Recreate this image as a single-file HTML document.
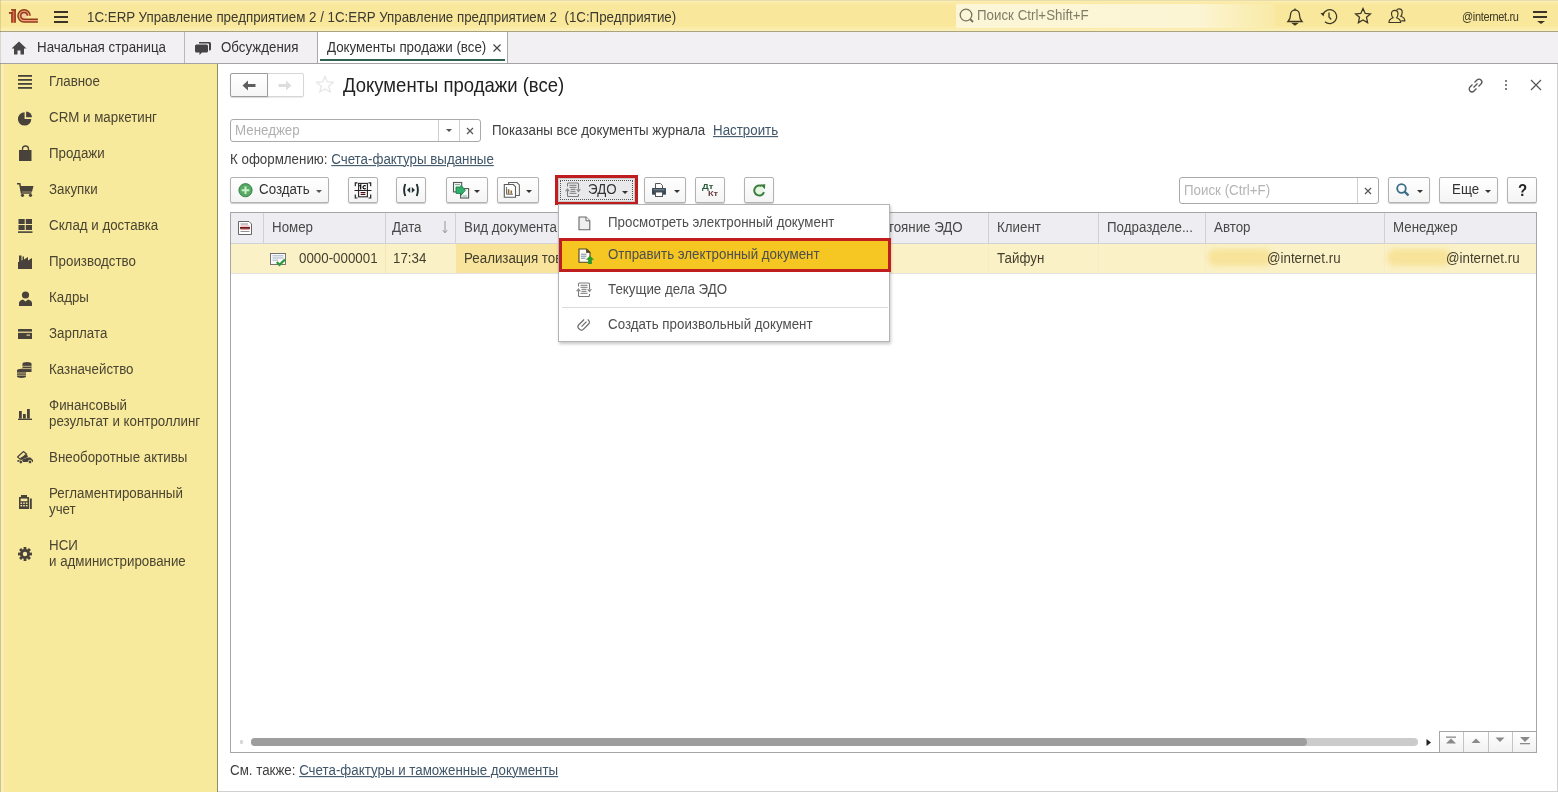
<!DOCTYPE html>
<html><head><meta charset="utf-8">
<style>
*{box-sizing:border-box;margin:0;padding:0}
html,body{width:1558px;height:792px;overflow:hidden;background:#fff}
.t{will-change:transform}
body{font-family:"Liberation Sans",sans-serif;font-size:13.33px;color:#404040;position:relative}
.a{position:absolute}
.t{position:absolute;white-space:pre;line-height:1;margin-top:0.6px;transform:scaleY(1.09);transform-origin:0 11.3px}
#topbar{left:0;top:0;width:1558px;height:32px;background:linear-gradient(#e9dcae 0,#e9dcae 1px,#fbeeb0 1px,#f9e89b 5px,#f9e89b 26px,#fbefb6 30px);border-bottom:1px solid #a9a47f}
#tabs{left:0;top:32px;width:1558px;height:32px;background:#f2f0f2;border-bottom:1px solid #a3a3a3}
#side{left:0;top:64px;width:218px;height:728px;background:linear-gradient(90deg,#ded9a8 0,#ded9a8 1px,#faf0b2 1px,#faf0b2 3px,#fce7a0 4px,#fbe9a0 8px,#f8ea9d 9px);border-right:1px solid #918c62}
.btn{position:absolute;height:26px;top:177px;background:linear-gradient(#fff,#f4f4f4);border:1px solid #b2b2b2;border-radius:2px;box-shadow:0 1px 1px rgba(0,0,0,.2)}
.caret{position:absolute;width:0;height:0;border-left:3px solid transparent;border-right:3px solid transparent;border-top:3px solid #555}
.sb{color:#4a4432}
.th{color:#484848}
.tr{color:#433f2e}
.mi{color:#4e4e4e}
.lnk{color:#3f5568;text-decoration:underline;text-underline-offset:1px;text-decoration-thickness:1px}
</style></head><body>
<!-- TOP BAR -->
<div id="topbar" class="a"></div>
<svg class="a" style="left:8px;top:8px" width="32" height="16" viewBox="0 0 32 16">
 <path d="M22.15 7.85 A6.1 6.1 0 1 0 16.05 13.95 H29.9 V11.15 H16.05 A3.3 3.3 0 1 1 19.35 7.85 Z" fill="#f2a07e"/>
 <circle cx="16.05" cy="7.85" r="2.6" fill="#f8c9a4"/>
 <path d="M3.9 1.8 H7.1 V14.7 H3.9 Z M1 4.8 H3.9 V6 H1 Z" fill="#e26a48"/>
 <g fill="none" stroke="#8f3c1b" stroke-width="1.5">
  <path d="M0.9 4.8 H4.6"/><path d="M3.9 4.1 V14.7"/><path d="M3 1.9 H7.9"/><path d="M7.15 1.2 V14.7"/>
  <path d="M22.15 7.85 A6.1 6.1 0 1 0 16.05 13.95 H29.9"/>
  <path d="M19.35 7.85 A3.3 3.3 0 1 0 16.05 11.15 H29.9"/>
 </g>
</svg>
<div class="a" style="left:54px;top:11px;width:14px;height:1.5px;background:#3a3528"></div>
<div class="a" style="left:54px;top:16px;width:14px;height:1.5px;background:#3a3528"></div>
<div class="a" style="left:54px;top:21px;width:14px;height:1.5px;background:#3a3528"></div>
<div class="t" style="left:87px;top:10px;color:#3c3a30">1С:ERP Управление предприятием 2 / 1С:ERP Управление предприятием 2  (1С:Предприятие)</div>
<div class="a" style="left:956px;top:4px;width:319px;height:24px;background:linear-gradient(90deg,#fcf6d8 0,#fcf5d4 75%,#f9eaa6 100%)"></div>
<svg class="a" style="left:959px;top:7.5px" width="18" height="17" viewBox="0 0 18 17"><circle cx="7" cy="7" r="5.8" fill="none" stroke="#77745e" stroke-width="1.3"/><path d="M11 11 L14 14" stroke="#77745e" stroke-width="2"/></svg>
<div class="t" style="left:977px;top:8.5px;color:#7f7c68">Поиск Ctrl+Shift+F</div>
<svg class="a" style="left:1286px;top:7px" width="18" height="19" viewBox="0 0 18 19" fill="none" stroke="#3d3826" stroke-width="1.3">
 <path d="M2 14.5 H16 C14 12.5 13.5 11 13.5 8 C13.5 5 11.5 3 9 3 C6.5 3 4.5 5 4.5 8 C4.5 11 4 12.5 2 14.5 Z"/><path d="M9 1.5 V3"/><path d="M7 16.5 H11 L9 18 Z" fill="#3d3826"/>
</svg>
<svg class="a" style="left:1320px;top:8px" width="18" height="17" viewBox="0 0 18 17" fill="none" stroke="#3d3826" stroke-width="1.3">
 <path d="M3.2 6 A7 7 0 1 1 5 13.8"/><path d="M0.5 5.3 L4.5 4.5 L3.5 8.5 Z" fill="#3d3826" stroke="none"/><path d="M9 4.5 V9 L11.2 11.5"/>
</svg>
<svg class="a" style="left:1354px;top:7px" width="18" height="18" viewBox="0 0 18 18" fill="none" stroke="#3d3826" stroke-width="1.3">
 <path d="M9 1.5 L11.2 6.4 L16.4 6.9 L12.5 10.3 L13.6 15.6 L9 12.9 L4.4 15.6 L5.5 10.3 L1.6 6.9 L6.8 6.4 Z"/>
</svg>
<svg class="a" style="left:1388px;top:8px" width="18" height="16" viewBox="0 0 18 16" fill="none" stroke="#3d3826" stroke-width="1.2">
 <path d="M1 14.5 C1 11.5 3 10.5 5 9.8 C3.6 8.5 3.5 6.8 3.5 5.5 C3.5 3.5 5 2.3 6.8 2.3 C8.6 2.3 10 3.5 10 5.5 C10 6.8 9.9 8.5 8.6 9.8 C10.6 10.5 12.6 11.5 12.6 14.5 Z"/>
 <path d="M8.6 2.2 C9.1 1.3 10 0.8 11 0.8 C12.8 0.8 14.2 2 14.2 4 C14.2 5.3 14.1 7 12.8 8.3 C14.8 9 16.8 10 16.8 12.8 H13.2"/>
</svg>
<div class="t" style="left:1462px;top:11px;color:#3c3826;font-size:11px;letter-spacing:-0.35px">@internet.ru</div>
<div class="a" style="left:1533px;top:11px;width:14px;height:1.5px;background:#3a3528"></div>
<div class="a" style="left:1533px;top:16px;width:14px;height:1.5px;background:#3a3528"></div>
<div class="a" style="left:1537px;top:21px;width:0;height:0;border-left:4px solid transparent;border-right:4px solid transparent;border-top:3px solid #3a3528"></div>

<!-- TABS -->
<div id="tabs" class="a"></div>
<div class="a" style="left:184px;top:32px;width:1px;height:31px;background:#b8b8b8"></div>
<div class="a" style="left:317px;top:32px;width:191px;height:31px;background:#fff;border-left:1px solid #a8a8a8;border-right:1px solid #a8a8a8"></div>
<div class="a" style="left:320px;top:59px;width:185px;height:2px;background:#2f6350"></div>
<svg class="a" style="left:11px;top:41px" width="16" height="14" viewBox="0 0 16 14"><path d="M8 0.5 L15.5 7.5 H13 V13.5 H9.5 V9.5 H6.5 V13.5 H3 V7.5 H0.5 Z" fill="#474747"/></svg>
<div class="t" style="left:37px;top:40px;color:#333">Начальная страница</div>
<svg class="a" style="left:194px;top:40px" width="18" height="16" viewBox="0 0 18 16"><path d="M5 2 H15.5 Q17 2 17 3.5 V9 Q17 10.5 15.5 10.5 H15 V4.5 Q15 3.5 14 3.5 H5 Z" fill="#444"/><path d="M2.5 4.5 H12.5 Q14 4.5 14 6 V11 Q14 12.5 12.5 12.5 H8 L5.5 15 V12.5 H2.5 Q1 12.5 1 11 V6 Q1 4.5 2.5 4.5 Z" fill="#444"/></svg>
<div class="t" style="left:221px;top:40px;color:#333">Обсуждения</div>
<div class="t" style="left:327px;top:40px;color:#333">Документы продажи (все)</div>
<svg class="a" style="left:493px;top:44px" width="8" height="8" viewBox="0 0 8 8"><path d="M0.5 0.5 L7.5 7.5 M7.5 0.5 L0.5 7.5" stroke="#444" stroke-width="1.2"/></svg>

<!-- SIDEBAR -->
<div id="side" class="a"></div>
<svg class="a" style="left:18px;top:75px" width="14" height="14" viewBox="0 0 14 14" fill="#48423a"><rect x="0" y="0" width="14" height="1.8"/><rect x="0" y="4" width="14" height="1.8"/><rect x="0" y="8" width="14" height="1.8"/><rect x="0" y="12" width="14" height="1.8"/></svg>
<div class="t sb" style="left:49px;top:74px">Главное</div>
<svg class="a" style="left:18px;top:111px" width="15" height="15" viewBox="0 0 15 15"><path d="M6.6 1.2 V7.9 H13.3 A6.7 6.7 0 1 1 6.6 1.2 Z" fill="#48423a"/><path d="M8.1 0.4 A5.9 5.9 0 0 1 14 6.3 H8.1 Z" fill="#48423a"/></svg>
<div class="t sb" style="left:49px;top:110px">CRM и маркетинг</div>
<svg class="a" style="left:19px;top:145px" width="13" height="16" viewBox="0 0 13 16"><path d="M3.5 6 V4 A3 3 0 0 1 9.5 4 V6" stroke="#48423a" stroke-width="1.3" fill="none"/><rect x="0" y="5" width="12.5" height="11" fill="#48423a"/></svg>
<div class="t sb" style="left:49px;top:146px">Продажи</div>
<svg class="a" style="left:17px;top:183px" width="17" height="14" viewBox="0 0 17 14"><path d="M0 0.8 H2.8 L4.5 10 H14.5" stroke="#48423a" stroke-width="1.5" fill="none"/><path d="M3.2 3 H16.5 L15 8.8 H4.3 Z" fill="#48423a"/><circle cx="5.5" cy="12.3" r="1.6" fill="#48423a"/><circle cx="13.5" cy="12.3" r="1.6" fill="#48423a"/></svg>
<div class="t sb" style="left:49px;top:182px">Закупки</div>
<svg class="a" style="left:17.5px;top:219px" width="15" height="14" viewBox="0 0 15 14" fill="#48423a"><rect x="0.5" y="0" width="6.2" height="5"/><rect x="7.8" y="0" width="6.2" height="5"/><rect x="0.5" y="6" width="6.2" height="5"/><rect x="7.8" y="6" width="6.2" height="5"/><rect x="0" y="12.3" width="14.5" height="1.6"/></svg>
<div class="t sb" style="left:49px;top:218px">Склад и доставка</div>
<svg class="a" style="left:18px;top:255px" width="14" height="14" viewBox="0 0 14 14" fill="#48423a"><path d="M0 14 V7 L1 7 V0.5 H3.5 V5.5 L4.5 5 V1.5 L6 1.5 V4.5 L10 2 V5.5 L14 3 V14 Z"/></svg>
<div class="t sb" style="left:49px;top:254px">Производство</div>
<svg class="a" style="left:19px;top:290.5px" width="13" height="15" viewBox="0 0 13 15" fill="#48423a"><circle cx="6.5" cy="4" r="3.6"/><path d="M0 15 V12 C0 10 2 9 4 8.5 L6.5 10.5 L9 8.5 C11 9 13 10 13 12 V15 Z"/></svg>
<div class="t sb" style="left:49px;top:290px">Кадры</div>
<svg class="a" style="left:18px;top:329px" width="14" height="10" viewBox="0 0 14 10"><rect x="0" y="0" width="14" height="10" rx="0.5" fill="#48423a"/><rect x="0" y="2.6" width="14" height="1.2" fill="#f9eba3"/><rect x="8.5" y="5.6" width="3.5" height="1" fill="#f9eba3"/></svg>
<div class="t sb" style="left:49px;top:326px">Зарплата</div>
<svg class="a" style="left:17px;top:362px" width="15" height="16" viewBox="0 0 15 16" fill="#48423a"><ellipse cx="10" cy="1.8" rx="4.5" ry="1.8"/><rect x="5.5" y="2" width="9" height="8"/><ellipse cx="4.5" cy="8.5" rx="4.5" ry="1.8"/><rect x="0" y="8.5" width="9" height="6"/><ellipse cx="4.5" cy="14.3" rx="4.5" ry="1.7"/><path d="M5.5 4.3 H14.5 M5.5 6.6 H14.5 M0 11 H9 M0 13.2 H9" stroke="#f9eba3" stroke-width="0.7"/></svg>
<div class="t sb" style="left:49px;top:362px">Казначейство</div>
<svg class="a" style="left:18px;top:409px" width="14" height="11" viewBox="0 0 14 11" fill="#48423a"><rect x="1" y="2" width="2.8" height="7.5"/><rect x="5" y="5" width="2.8" height="4.5"/><rect x="9" y="0" width="2.8" height="9.5"/><rect x="0" y="9.6" width="14" height="1.4"/></svg>
<div class="t sb" style="left:49px;top:398px">Финансовый</div>
<div class="t sb" style="left:49px;top:414px">результат и контроллинг</div>
<svg class="a" style="left:16.5px;top:451px" width="17" height="13" viewBox="0 0 17 13" fill="#48423a"><path d="M0.5 6 L6.5 0.5 L9.5 3 L3.5 8.5 Z" fill="none" stroke="#48423a" stroke-width="1.2"/><path d="M4 9 L11 6.5 H13.5 L16 9 V11 H0.5 V9 Z"/><path d="M3 7 L10 3.5 L11 6 L4 9 Z"/><circle cx="3.8" cy="11" r="1.8" fill="#48423a" stroke="#f9eba3" stroke-width="0.8"/><circle cx="13" cy="11" r="1.8" fill="#48423a" stroke="#f9eba3" stroke-width="0.8"/></svg>
<div class="t sb" style="left:49px;top:450px">Внеоборотные активы</div>
<svg class="a" style="left:18.5px;top:495px" width="13" height="14" viewBox="0 0 13 14" fill="#48423a"><rect x="0" y="2" width="10" height="12"/><rect x="10.8" y="3.5" width="2" height="10.5"/><rect x="2" y="0" width="6" height="3"/><g fill="#f9eba3"><rect x="1.6" y="3.6" width="6.8" height="2.6"/><rect x="1.5" y="7.5" width="1.6" height="1.4"/><rect x="4.2" y="7.5" width="1.6" height="1.4"/><rect x="6.9" y="7.5" width="1.6" height="1.4"/><rect x="1.5" y="10" width="1.6" height="1.4"/><rect x="4.2" y="10" width="1.6" height="1.4"/><rect x="6.9" y="10" width="1.6" height="1.4"/></g></svg>
<div class="t sb" style="left:49px;top:486px">Регламентированный</div>
<div class="t sb" style="left:49px;top:502px">учет</div>
<svg class="a" style="left:18px;top:547px" width="14" height="14" viewBox="0 0 14 14"><g fill="#48423a"><circle cx="7" cy="7" r="5"/><g id="tt"><rect x="5.6" y="0" width="2.8" height="14"/></g><rect x="5.6" y="0" width="2.8" height="14" transform="rotate(45 7 7)"/><rect x="5.6" y="0" width="2.8" height="14" transform="rotate(90 7 7)"/><rect x="5.6" y="0" width="2.8" height="14" transform="rotate(135 7 7)"/></g><circle cx="7" cy="7" r="2.2" fill="#f9eba3"/></svg>
<div class="t sb" style="left:49px;top:538px">НСИ</div>
<div class="t sb" style="left:49px;top:554px">и администрирование</div>


<!-- MAIN HEADER -->
<div class="a" style="left:1557px;top:64px;width:1px;height:728px;background:#d0d0d0"></div>
<div class="a" style="left:218px;top:791px;width:1340px;height:1px;background:#d0d0d0"></div>
<div class="a" style="left:267px;top:73px;width:37px;height:24px;border:1px solid #d6d6d6;border-radius:0 2px 2px 0;background:#fff;box-shadow:0 1px 1px rgba(0,0,0,.08)"></div>
<div class="a" style="left:230px;top:73px;width:38px;height:24px;border:1px solid #9c9c9c;border-radius:2px 0 0 2px;background:linear-gradient(#fff,#f6f6f6);box-shadow:0 1px 1px rgba(0,0,0,.15)"></div>
<svg class="a" style="left:242px;top:80px" width="14" height="12" viewBox="0 0 14 12"><path d="M0.5 5.5 L6 0.5 V4 H13.5 V7 H6 V10.5 Z" fill="#5e5e5e"/></svg>
<svg class="a" style="left:278px;top:80px" width="14" height="12" viewBox="0 0 14 12"><path d="M13.5 5.5 L8 0.5 V4 H0.5 V7 H8 V10.5 Z" fill="#dedede"/></svg>
<svg class="a" style="left:315px;top:75px" width="20" height="19" viewBox="0 0 20 19"><path d="M10 1.5 L12.4 7 L18.3 7.4 L13.8 11.2 L15.2 17 L10 13.9 L4.8 17 L6.2 11.2 L1.7 7.4 L7.6 7 Z" fill="none" stroke="#e6e6e6" stroke-width="1.3"/></svg>
<div class="t" style="left:343px;top:76px;font-size:18.5px;color:#222;transform-origin:0 15.66px">Документы продажи (все)</div>
<svg class="a" style="left:1467px;top:77px" width="17" height="17" viewBox="0 0 17 17" fill="none" stroke="#555" stroke-width="1.3"><path d="M7.5 5.5 L10 3 A2.6 2.6 0 0 1 14 7 L11.5 9.5"/><path d="M9.5 11.5 L7 14 A2.6 2.6 0 0 1 3 10 L5.5 7.5"/><path d="M6.5 10.5 L10.5 6.5"/></svg>
<div class="a" style="left:1505px;top:80px;width:2px;height:2px;background:#555;border-radius:1px"></div>
<div class="a" style="left:1505px;top:84px;width:2px;height:2px;background:#555;border-radius:1px"></div>
<div class="a" style="left:1505px;top:88px;width:2px;height:2px;background:#555;border-radius:1px"></div>
<svg class="a" style="left:1530px;top:79px" width="12" height="12" viewBox="0 0 12 12"><path d="M1 1 L11 11 M11 1 L1 11" stroke="#555" stroke-width="1.2"/></svg>

<!-- FILTER -->
<div class="a" style="left:230px;top:119px;width:251px;height:23px;border:1px solid #a9a9a9;border-radius:3px;background:#fff"></div>
<div class="a" style="left:438px;top:120px;width:1px;height:21px;background:#d0d0d0"></div>
<div class="a" style="left:459px;top:120px;width:1px;height:21px;background:#d0d0d0"></div>
<div class="t" style="left:235px;top:123px;color:#b0b0b0">Менеджер</div>
<div class="caret" style="left:445.5px;top:129px;border-top-color:#555"></div>
<svg class="a" style="left:466px;top:127px" width="8" height="8" viewBox="0 0 8 8"><path d="M1 1 L7 7 M7 1 L1 7" stroke="#555" stroke-width="1.2"/></svg>
<div class="t" style="left:492px;top:123px;color:#404040">Показаны все документы журнала</div>
<div class="t lnk" style="left:713px;top:123px">Настроить</div>
<div class="t" style="left:230px;top:152px;color:#404040">К оформлению: <span class="lnk">Счета-фактуры выданные</span></div>

<!-- TOOLBAR -->
<div class="btn" style="left:230px;width:99px"></div>
<svg class="a" style="left:237.5px;top:182.5px" width="15" height="15" viewBox="0 0 15 15"><circle cx="7.5" cy="7.2" r="6.6" fill="#58a866" stroke="#2f7a40" stroke-width="0.9"/><path d="M7.5 3.4 V11 M3.7 7.2 H11.3" stroke="#c9f3c9" stroke-width="2"/></svg>
<div class="t" style="left:259px;top:182px;color:#333">Создать</div>
<div class="caret" style="left:316px;top:190px;border-left-width:3.5px;border-right-width:3.5px;border-top-width:3.5px"></div>

<div class="btn" style="left:348px;width:30px"></div>
<svg class="a" style="left:354px;top:182px" width="18" height="17" viewBox="0 0 18 17">
 <path d="M3.5 0.8 H1.3 V4.2 M14.5 0.8 H16.7 V4.2 M1.3 12.6 V16 H3.5 M16.7 12.6 V16 H14.5" fill="none" stroke="#222" stroke-width="1.2"/>
 <rect x="4.6" y="1.4" width="8.8" height="13.4" fill="#fff" stroke="#2a2222" stroke-width="1.1"/>
 <path d="M0.5 8.5 H17.5" stroke="#2a2222" stroke-width="1"/>
 <path d="M6.6 10.6 H11.4 M6.6 12.5 H11.4" stroke="#4a1010" stroke-width="1.1"/>
 <path d="M5.4 3.9 L6.7 3 V7.6" fill="none" stroke="#000" stroke-width="1.2"/>
 <path d="M11.73 4.17 A1.6 1.6 0 1 0 11.73 6.43" fill="none" stroke="#000" stroke-width="1.2"/>
</svg>

<div class="btn" style="left:396px;width:30px"></div>
<svg class="a" style="left:402px;top:183px" width="18" height="14" viewBox="0 0 18 14">
 <path d="M3.3 1 Q0.9 7 3.3 13" fill="none" stroke="#1f2f2f" stroke-width="1.9"/><path d="M14.7 1 Q17.1 7 14.7 13" fill="none" stroke="#1f2f2f" stroke-width="1.9"/>
 <path d="M8.2 4 L5 7 L8.2 10 Z M9.8 4 L13 7 L9.8 10 Z" fill="#1f2f2f"/>
</svg>

<div class="btn" style="left:446px;width:42px"></div>
<svg class="a" style="left:452px;top:181px" width="18" height="18" viewBox="0 0 18 18">
 <rect x="1.5" y="1.5" width="8.2" height="9.4" fill="#f4fbf6" stroke="#555" stroke-width="1.1"/>
 <path d="M3 3.6 H8" stroke="#6a9a88" stroke-width="0.9"/>
 <rect x="8.6" y="7.6" width="8" height="9.4" fill="#f4fbf6" stroke="#555" stroke-width="1.1"/>
 <path d="M10.5 15 H15" stroke="#6a9a88" stroke-width="0.8"/>
 <path d="M4 6 L9 6 L9 4.3 L13.3 9.3 L9 14.3 L9 12.4 L4 12.4 Z" fill="#33b070" stroke="#1d7d48" stroke-width="0.9" stroke-linejoin="round"/>
</svg>
<div class="caret" style="left:474px;top:190px;border-left-width:3.5px;border-right-width:3.5px;border-top-width:3px;border-top-color:#333"></div>

<div class="btn" style="left:497px;width:42px"></div>
<svg class="a" style="left:503px;top:181px" width="18" height="18" viewBox="0 0 18 18">
 <path d="M5.6 1.5 H14 L16.4 3.9 V14.5 H5.6 Z" fill="#fafaf6" stroke="#666" stroke-width="1.1"/>
 <path d="M1.3 3.5 H10.3 L12.5 5.7 V16.3 H1.3 Z" fill="#fff" stroke="#5a5a5a" stroke-width="1.1"/>
 <path d="M3.6 6 V13.2 H10" fill="none" stroke="#555" stroke-width="0.9"/>
 <path d="M5.6 12.8 V8.2 M8.3 12.8 V9.5" stroke="#8a6a30" stroke-width="1.6"/>
</svg>
<div class="caret" style="left:526px;top:190px;border-left-width:3.5px;border-right-width:3.5px;border-top-width:3px;border-top-color:#333"></div>

<!-- EDO pressed -->
<div class="a" style="left:558px;top:178px;width:77px;height:24px;background:#e9e9eb;border:1px solid #c8c8c8"></div>
<div class="a" style="left:560px;top:180px;width:73px;height:20px;border:1px dotted #555"></div>
<svg class="a" style="left:564px;top:182px" width="18" height="15" viewBox="0 0 18 15">
 <path d="M3.5 4.5 V2 Q3.5 1 4.5 1 H13.5 Q14.5 1 14.5 2 V7 M3.5 9 V13.5 Q3.5 14.5 4.5 14.5 H13.5 Q14.5 14.5 14.5 13.5 V12" fill="none" stroke="#7a7a7a" stroke-width="1.1"/>
 <path d="M5.5 3.3 H12.5 M5.5 5.3 H12.5 M6.5 7.3 H11.5 M6.5 9.3 H11.5 M5.5 11.3 H12.5" stroke="#777" stroke-width="1"/>
 <path d="M1 9.2 L3.5 6 L6 9.2 Z M12 7.2 H17 L14.5 10.4 Z" fill="#8a8a8a"/>
</svg>
<div class="t" style="left:587.5px;top:182px;color:#333">ЭДО</div>
<div class="caret" style="left:622px;top:190.5px;border-top-color:#333"></div>
<div class="a" style="left:555px;top:175px;width:83px;height:30px;border:3px solid #c01e1e"></div>

<div class="btn" style="left:644px;width:42px"></div>
<svg class="a" style="left:652px;top:183px" width="14" height="14" viewBox="0 0 14 14">
 <path d="M3.5 5 V0.5 H8.5 L10.5 2.5 V5" fill="#fff" stroke="#555" stroke-width="1"/>
 <rect x="0" y="5" width="14" height="6.7" rx="0.8" fill="#3b4a56"/>
 <path d="M1.5 6.8 H12.5" stroke="#7f94a3" stroke-width="0.9"/>
 <rect x="3.5" y="9" width="7" height="4.5" fill="#fff" stroke="#555" stroke-width="1"/>
</svg>
<div class="caret" style="left:673.5px;top:190px;border-left-width:3px;border-right-width:3px;border-top-width:3px;border-top-color:#333"></div>

<div class="btn" style="left:695px;width:30px"></div>
<div class="t" style="left:702px;top:182.8px;margin-top:0;transform:scaleX(1.18);transform-origin:0 0;font-size:8px;font-weight:bold;color:#2b5a3c;-webkit-text-stroke:0">Дт</div>
<div class="t" style="left:708px;top:190.3px;margin-top:0;transform:scaleX(1.15);transform-origin:0 0;font-size:8px;font-weight:bold;color:#6a3a42;-webkit-text-stroke:0">Кт</div>

<div class="btn" style="left:744px;width:30px"></div>
<svg class="a" style="left:752.5px;top:183.5px" width="13" height="13" viewBox="0 0 13 13">
 <circle cx="6.3" cy="6.5" r="4" fill="#e2f6e0"/>
 <path d="M11 8.2 A5 5 0 1 1 8.6 2.1" fill="none" stroke="#3c7d3e" stroke-width="2"/>
 <path d="M7.2 0.6 L12.3 0.3 L11.8 5.2 Z" fill="#3c7d3e"/>
</svg>

<!-- right toolbar -->
<div class="a" style="left:1179px;top:177px;width:200px;height:27px;border:1px solid #a9a9a9;border-radius:3px;background:#fff"></div>
<div class="a" style="left:1357px;top:178px;width:1px;height:25px;background:#d0d0d0"></div>
<div class="t" style="left:1184px;top:183px;color:#b4b4b4">Поиск (Ctrl+F)</div>
<svg class="a" style="left:1363.5px;top:187px" width="8" height="8" viewBox="0 0 8 8"><path d="M1 1 L7 7 M7 1 L1 7" stroke="#555" stroke-width="1.2"/></svg>

<div class="btn" style="left:1388px;width:42px"></div>
<svg class="a" style="left:1396px;top:183px" width="14" height="14" viewBox="0 0 14 14"><circle cx="5.5" cy="5.5" r="4.3" fill="none" stroke="#3a6c86" stroke-width="1.8"/><path d="M8.5 8.5 L12.5 12.5" stroke="#3a6c86" stroke-width="2.4"/></svg>
<div class="caret" style="left:1417px;top:190px;border-top-color:#333"></div>

<div class="btn" style="left:1439px;width:59px"></div>
<div class="t" style="left:1452px;top:182px;color:#333">Еще</div>
<div class="caret" style="left:1485px;top:190px;border-top-color:#333"></div>

<div class="btn" style="left:1507px;width:30px"></div>
<div class="t" style="left:1517.5px;top:182px;font-size:15px;font-weight:bold;color:#222">?</div>

<!-- TABLE -->
<div class="a" style="left:230px;top:212px;width:1307px;height:541px;border:1px solid #a5a5a5;background:#fff"></div>
<div class="a" style="left:231px;top:213px;width:1305px;height:30px;background:#eeeef2"></div>
<div class="a" style="left:231px;top:243px;width:1305px;height:1px;background:#d2d2d2"></div>
<div class="a" style="left:231px;top:244px;width:1305px;height:29px;background:#fbf1c6"></div>
<div class="a" style="left:456px;top:244px;width:435px;height:29px;background:#f8e49c"></div>
<div class="a" style="left:231px;top:273px;width:1305px;height:1px;background:#e2e2e2"></div>
<div class="a" style="left:263px;top:213px;width:1px;height:30px;background:#d0d0d0"></div>
<div class="a" style="left:385px;top:213px;width:1px;height:30px;background:#d0d0d0"></div>
<div class="a" style="left:455px;top:213px;width:1px;height:30px;background:#d0d0d0"></div>
<div class="a" style="left:988px;top:213px;width:1px;height:30px;background:#d0d0d0"></div>
<div class="a" style="left:1098px;top:213px;width:1px;height:30px;background:#d0d0d0"></div>
<div class="a" style="left:1205px;top:213px;width:1px;height:30px;background:#d0d0d0"></div>
<div class="a" style="left:1384px;top:213px;width:1px;height:30px;background:#d0d0d0"></div>
<div class="a" style="left:385px;top:244px;width:1px;height:29px;background:#f3e6b8"></div>
<div class="a" style="left:988px;top:244px;width:1px;height:29px;background:#f6ecc8"></div>
<div class="a" style="left:1098px;top:244px;width:1px;height:29px;background:#f6ecc8"></div>
<div class="a" style="left:1205px;top:244px;width:1px;height:29px;background:#f6ecc8"></div>
<div class="a" style="left:1384px;top:244px;width:1px;height:29px;background:#f6ecc8"></div>
<svg class="a" style="left:238px;top:221px" width="14" height="14" viewBox="0 0 14 14">
 <path d="M0.5 0.5 H11 L13.5 3 V13.5 H0.5 Z" fill="#fff" stroke="#555" stroke-width="0.9"/>
 <path d="M2.5 3 H10 M2.5 10.5 H11.5" stroke="#777" stroke-width="0.8"/>
 <path d="M2.5 5 H11.5 M2.5 8.5 H11.5" stroke="#e08080" stroke-width="0.8"/>
 <rect x="2" y="6" width="10" height="1.8" fill="#6a1a1a"/>
</svg>
<div class="t th" style="left:272px;top:220px">Номер</div>
<div class="t th" style="left:392px;top:220px">Дата</div>
<svg class="a" style="left:441px;top:221px" width="8" height="13" viewBox="0 0 8 13"><path d="M4 0 V11.5" stroke="#8a8a8a" stroke-width="0.9"/><path d="M1.8 9.2 L4 11.8 L6.2 9.2" fill="none" stroke="#8a8a8a" stroke-width="0.9"/></svg>
<div class="t th" style="left:464px;top:220px">Вид документа</div>
<div class="t th" style="left:863.5px;top:220px">Состояние ЭДО</div>
<div class="t th" style="left:997px;top:220px">Клиент</div>
<div class="t th" style="left:1107px;top:220px">Подразделе...</div>
<div class="t th" style="left:1214px;top:220px">Автор</div>
<div class="t th" style="left:1393px;top:220px">Менеджер</div>

<svg class="a" style="left:270px;top:253px" width="17" height="14" viewBox="0 0 17 14">
 <rect x="0.5" y="0.5" width="15" height="11" fill="#fafafa" stroke="#666" stroke-width="0.9"/>
 <path d="M2.5 2.8 H13.5 M2.5 5 H13.5 M2.5 7.2 H8" stroke="#8aa0b8" stroke-width="0.8"/>
 <path d="M6.8 9 L9.5 11.8 L15 6.5" fill="none" stroke="#2f9a3a" stroke-width="2.3"/>
</svg>
<div class="t tr" style="left:299px;top:251px">0000-000001</div>
<div class="t tr" style="left:393px;top:251px">17:34</div>
<div class="t tr" style="left:464px;top:251px">Реализация товаров</div>
<div class="t tr" style="left:997px;top:251px">Тайфун</div>
<div class="a" style="left:1208px;top:249px;width:64px;height:17px;border-radius:8px;background:#f7e39a;filter:blur(2.5px)"></div>
<div class="a" style="left:1387px;top:249px;width:64px;height:17px;border-radius:8px;background:#f7e39a;filter:blur(2.5px)"></div>
<div class="t tr" style="left:1267px;top:251px">@internet.ru</div>
<div class="t tr" style="left:1446px;top:251px">@internet.ru</div>

<!-- scrollbar -->
<div class="a" style="left:240px;top:740px;width:3px;height:4px;background:#d8d8d8;border-radius:1px"></div>
<div class="a" style="left:251px;top:738px;width:1167px;height:8px;border-radius:4px;background:#cbcbcb"></div>
<div class="a" style="left:251px;top:738px;width:1056px;height:8px;border-radius:4px;background:#9d9d9d"></div>
<svg class="a" style="left:1426px;top:739px" width="6" height="7" viewBox="0 0 6 7"><path d="M0.5 0 L5 3.5 L0.5 7 Z" fill="#222"/></svg>
<div class="a" style="left:1439px;top:731px;width:98px;height:22px;border:1px solid #a5a5a5;border-right-color:#a5a5a5;background:linear-gradient(#fff,#f1f1f1)"></div>
<div class="a" style="left:1463px;top:732px;width:1px;height:20px;background:#c4c4c4"></div>
<div class="a" style="left:1488px;top:732px;width:1px;height:20px;background:#c4c4c4"></div>
<div class="a" style="left:1512px;top:732px;width:1px;height:20px;background:#c4c4c4"></div>
<svg class="a" style="left:1444px;top:736px" width="14" height="11" viewBox="0 0 14 11" fill="#8a8a8a"><rect x="2" y="0.5" width="10" height="1.3"/><path d="M7 2.5 L12 7.5 H2 Z"/></svg>
<svg class="a" style="left:1469px;top:736px" width="14" height="11" viewBox="0 0 14 11" fill="#8a8a8a"><path d="M7 2.5 L11.5 7 H2.5 Z"/></svg>
<svg class="a" style="left:1493px;top:736px" width="14" height="11" viewBox="0 0 14 11" fill="#8a8a8a"><path d="M2.5 1.5 H11.5 L7 6 Z"/></svg>
<svg class="a" style="left:1518px;top:736px" width="14" height="11" viewBox="0 0 14 11" fill="#8a8a8a"><path d="M2 1 H12 L7 6 Z"/><rect x="2" y="7" width="10" height="1.3"/></svg>

<div class="t" style="left:230px;top:763px;color:#404040">См. также: <span class="lnk">Счета-фактуры и таможенные документы</span></div>

<!-- MENU -->
<div class="a" style="left:558px;top:204px;width:332px;height:138px;background:#fff;border:1px solid #b4b4b4;box-shadow:1px 2px 3px rgba(0,0,0,.22)"></div>
<div class="a" style="left:562px;top:307px;width:326px;height:1px;background:#dcdcdc"></div>
<div class="a" style="left:559px;top:238px;width:332px;height:34px;background:#f6c623;border:3px solid #c01e1e"></div>
<svg class="a" style="left:577.5px;top:215.5px" width="13" height="15" viewBox="0 0 13 15"><path d="M1 1 H8 L11.8 4.8 V13.8 H1 Z" fill="#efefef" stroke="#666" stroke-width="1.1"/><path d="M8 1 V4.8 H11.8" fill="#fff" stroke="#666" stroke-width="1"/></svg>
<div class="t mi" style="left:608px;top:215px">Просмотреть электронный документ</div>
<svg class="a" style="left:577.5px;top:247.5px" width="17" height="17" viewBox="0 0 17 17"><path d="M1 1 H8.5 L12 4.5 V14.3 H1 Z" fill="#fbfbf4" stroke="#4f4528" stroke-width="1.1"/><path d="M8.5 1 V4.5 H12 Z" fill="#4f4528" stroke="#4f4528" stroke-width="0.8"/><path d="M3 6.2 H8.5 M3 8.2 H8.5 M3 10.2 H7.5" stroke="#5a6f8f" stroke-width="0.8"/><path d="M12 7.8 L16.2 11.8 H13.9 V16 H10.1 V11.8 H7.8 Z" fill="#2f9a2c"/></svg>
<div class="t mi" style="left:608px;top:247px">Отправить электронный документ</div>
<svg class="a" style="left:575px;top:282px" width="18" height="15" viewBox="0 0 18 15">
 <path d="M3.5 4.5 V2 Q3.5 1 4.5 1 H13.5 Q14.5 1 14.5 2 V7 M3.5 9 V13.5 Q3.5 14.5 4.5 14.5 H13.5 Q14.5 14.5 14.5 13.5 V12" fill="none" stroke="#7a7a7a" stroke-width="1.1"/>
 <path d="M5.5 3.3 H12.5 M5.5 5.3 H12.5 M6.5 7.3 H11.5 M6.5 9.3 H11.5 M5.5 11.3 H12.5" stroke="#777" stroke-width="1"/>
 <path d="M1 9.2 L3.5 6 L6 9.2 Z M12 7.2 H17 L14.5 10.4 Z" fill="#8a8a8a"/>
</svg>
<div class="t mi" style="left:608px;top:282px">Текущие дела ЭДО</div>
<svg class="a" style="left:577px;top:317px" width="14" height="15" viewBox="0 0 14 15"><g transform="translate(6.8 7.3) rotate(45)" fill="none" stroke="#6a6a6a" stroke-width="1.2"><path d="M-0.6 -6.2 H0.6 A2.6 2.6 0 0 1 3.2 -3.6 V3.9 A2.6 2.6 0 0 1 0.6 6.5 H-0.6 A2.6 2.6 0 0 1 -3.2 3.9 V-3.6"/><path d="M0 -3.8 V3.2"/></g></svg>
<div class="t mi" style="left:608px;top:317px">Создать произвольный документ</div>
<div class="a" style="left:0;top:0;width:1px;height:792px;background:rgba(90,80,30,.16)"></div>
</body></html>
